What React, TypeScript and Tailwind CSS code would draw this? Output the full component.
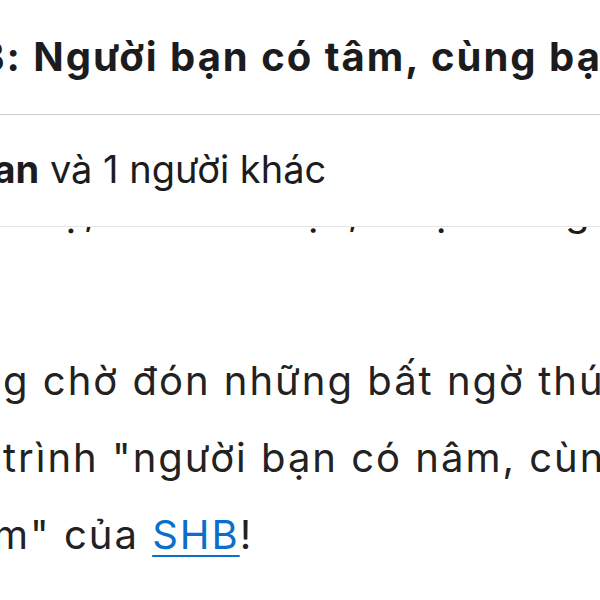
import React from 'react';

const App: React.FC = () => {
    return (
        <div className="w-[600px] h-[600px] overflow-hidden bg-white text-[#1c1c1e] font-['Inter','Noto_Sans',sans-serif]">
            {/* Header */}
            <div className="h-[115px] border-b border-[#cfcfd3] pt-[33px] overflow-hidden">
                <div className="ml-[-22px] whitespace-nowrap text-[40px] leading-[48px] font-bold tracking-[0.05em]">
                    B: Người bạn có tâm, cùng bạn có nhà
                </div>
            </div>

            {/* Likes */}
            <div className="h-[112px] border-b border-[#e4e4e7] pt-[30px] overflow-hidden">
                <div className="ml-[-28px] whitespace-nowrap text-[38px] leading-[48px]">
                    <span className="font-bold">Lan</span> và 1 người khác
                </div>
            </div>

            {/* Previous line, scrolled under the header */}
            <div className="h-[20px] overflow-hidden">
                <div className="mt-[-36px] flex whitespace-nowrap text-[40px] leading-[40px]">
                    <span className="ml-[66px]">ị</span>
                    <span className="ml-[8px]">,</span>
                    <span className="ml-[207px]">ạ</span>
                    <span className="ml-[23px]">,</span>
                    <span className="ml-[70px]">ụ</span>
                    <span className="ml-[112px]">g</span>
                </div>
            </div>

            {/* Body */}
            <div className="mt-[95px] text-[40px] leading-[77px] text-[#222222] whitespace-nowrap tracking-[0.05em]">
                <p className="ml-[3px]">g chờ đón những bất ngờ thú vị</p>
                <p className="ml-[3px]">trình "người bạn có nâm, cùng</p>
                <p className="ml-[-7px]">
                    m" của <a href="#" className="text-[#0a6fcb] underline decoration-2 underline-offset-[6px]">SHB</a>!
                </p>
            </div>
        </div>
    );
};

export default App;
